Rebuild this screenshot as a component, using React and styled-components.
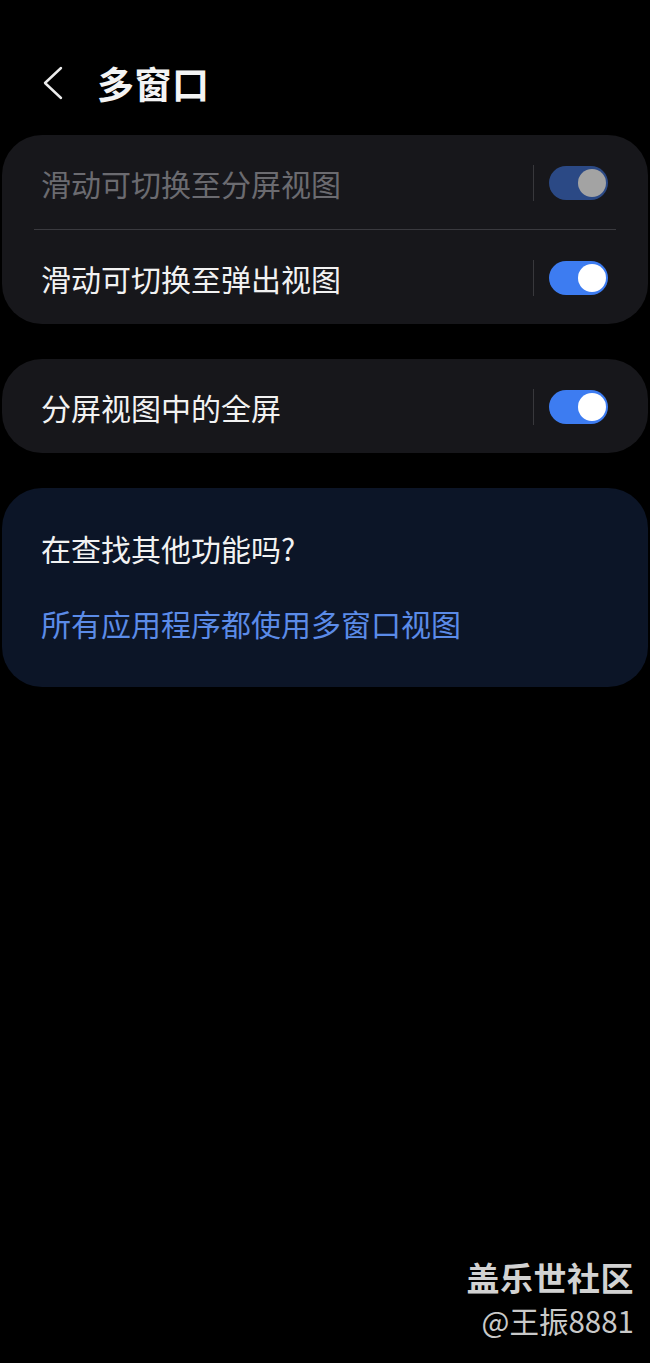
import styled, { createGlobalStyle } from 'styled-components'

const GlobalStyle = createGlobalStyle`
  html, body {
    margin: 0;
    padding: 0;
    background: #000000;
  }
  body {
    font-family: "Noto Sans CJK SC", "Noto Sans", sans-serif;
    -webkit-font-smoothing: antialiased;
  }
`

const Page = styled.div`
  position: relative;
  width: 650px;
  min-height: 1363px;
  background: #000000;
  display: flex;
  flex-direction: column;
  gap: 35px;
`

const Header = styled.div`
  display: flex;
  align-items: center;
  height: 100px;
  padding: 33px 0 0 43px;
  margin-bottom: -33px;
`

const BackButton = styled.button`
  background: none;
  border: none;
  padding: 0;
  width: 20px;
  height: 34px;
  display: flex;
  align-items: center;
  margin-right: 34px;
`

const Title = styled.h1`
  margin: 0;
  font-size: 37px;
  font-weight: 700;
  color: #f4f4f4;
  letter-spacing: 0.5px;
`

const Card = styled.div`
  margin: 0 2px;
  border-radius: 40px;
  background: ${p => p.$tint ? '#0c1527' : '#17171b'};
  display: flex;
  flex-direction: column;
`

const Row = styled.div`
  display: flex;
  align-items: center;
  height: 94px;
  padding: 2px 40px 0 39px;
  box-sizing: border-box;
`

const Label = styled.span`
  flex: 1;
  font-size: 30px;
  line-height: 40px;
  color: ${p => p.$dim ? '#6b6b70' : '#f2f2f2'};
`

const Separator = styled.div`
  height: 1px;
  background: #3a3a3f;
  margin: 0 32px;
`

const VDivider = styled.div`
  width: 1px;
  height: 36px;
  background: #38383c;
  margin-right: 15px;
`

const Track = styled.div`
  position: relative;
  width: 59px;
  height: 34px;
  border-radius: 17px;
  background: ${p => p.$disabled ? '#2b4985' : '#3d7cf1'};
`

const Knob = styled.div`
  position: absolute;
  top: 3px;
  right: 2px;
  width: 28px;
  height: 28px;
  border-radius: 50%;
  background: ${p => p.$disabled ? '#a3a3a3' : '#ffffff'};
`

const Promo = styled.div`
  padding: 40px 39px 44px;
  display: flex;
  flex-direction: column;
  gap: 35px;
`

const PromoTitle = styled.div`
  font-size: 30px;
  line-height: 40px;
  color: #f2f2f2;
`

const PromoLink = styled.a`
  font-size: 30px;
  line-height: 40px;
  color: #5b8be8;
  text-decoration: none;
`

const Watermark = styled.div`
  position: absolute;
  right: 16px;
  top: 1256px;
  display: flex;
  flex-direction: column;
  align-items: flex-end;
  color: #d2d2d2;
`

const MarkTitle = styled.div`
  font-size: 33px;
  line-height: 42px;
  font-weight: 700;
  letter-spacing: 0.5px;
`

const MarkUser = styled.div`
  font-size: 29.5px;
  line-height: 44px;
  color: #c9c9c9;
`

function Toggle({ disabled }) {
  return (
    <Track $disabled={disabled}>
      <Knob $disabled={disabled} />
    </Track>
  )
}

function SettingRow({ label, dim }) {
  return (
    <Row>
      <Label $dim={dim}>{label}</Label>
      <VDivider />
      <Toggle disabled={dim} />
    </Row>
  )
}

export default function App() {
  return (
    <Page>
      <GlobalStyle />
      <Header>
        <BackButton aria-label="back">
          <svg width="20" height="34" viewBox="0 0 20 34">
            <path d="M18 2 L2 17 L18 32" fill="none" stroke="#ececec" strokeWidth="2.4" strokeLinecap="round" strokeLinejoin="round" />
          </svg>
        </BackButton>
        <Title>多窗口</Title>
      </Header>

      <Card>
        <SettingRow label="滑动可切换至分屏视图" dim />
        <Separator />
        <SettingRow label="滑动可切换至弹出视图" />
      </Card>

      <Card>
        <SettingRow label="分屏视图中的全屏" />
      </Card>

      <Card $tint>
        <Promo>
          <PromoTitle>在查找其他功能吗?</PromoTitle>
          <PromoLink href="#">所有应用程序都使用多窗口视图</PromoLink>
        </Promo>
      </Card>

      <Watermark>
        <MarkTitle>盖乐世社区</MarkTitle>
        <MarkUser>@王振8881</MarkUser>
      </Watermark>
    </Page>
  )
}
